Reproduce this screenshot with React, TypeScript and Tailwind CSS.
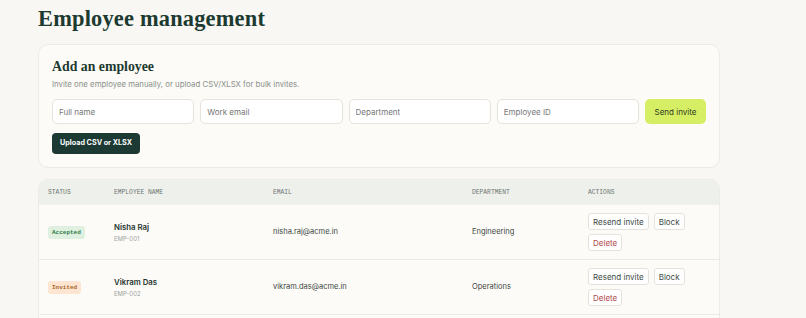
const employees = [
  {
    status: "Accepted",
    name: "Nisha Raj",
    id: "EMP-001",
    email: "nisha.raj@acme.in",
    department: "Engineering",
  },
  {
    status: "Invited",
    name: "Vikram Das",
    id: "EMP-002",
    email: "vikram.das@acme.in",
    department: "Operations",
  },
];

const FIELDS = ["Full name", "Work email", "Department", "Employee ID"];

function StatusBadge({ status }: { status: string }) {
  const accepted = status === "Accepted";
  return (
    <span
      className={
        accepted
          ? "inline-block rounded-[3px] bg-[#dff0e1] px-[4px] py-[3px] font-['Liberation_Mono',monospace] text-[6px] font-bold leading-[7px] text-[#2f7b45]"
          : "inline-block rounded-[3px] bg-[#fde5d2] px-[4px] py-[3px] font-['Liberation_Mono',monospace] text-[6px] font-bold leading-[7px] text-[#a9641f]"
      }
    >
      {status}
    </span>
  );
}

function ActionButton({ label, danger }: { label: string; danger?: boolean }) {
  return (
    <button
      className={
        "h-[17px] rounded-[3px] border border-[#e4e2da] bg-white px-[4px] text-[8px] leading-none " +
        (danger ? "text-[#b24a4a]" : "text-[#3d4a44]")
      }
    >
      {label}
    </button>
  );
}

export default function App() {
  return (
    <div className="min-h-screen bg-[#f8f7f3] px-[38px] pt-[5px] font-['Inter',sans-serif] text-[#1c3a30]">
      <div className="w-[682px]">
        <h1 className="font-['Liberation_Serif',serif] text-[22.4px] font-bold leading-[28px] tracking-[0.2px]">
          Employee management
        </h1>

        <section className="mt-[11px] rounded-[10px] border border-[#ecebe4] bg-[#fcfbf7] px-[13px] pb-[13px] pt-[12px]">
          <h2 className="font-['Liberation_Serif',serif] text-[13.8px] font-bold leading-[20px]">
            Add an employee
          </h2>
          <p className="mt-[1px] text-[7.8px] leading-[12px] text-[#8a8f8a]">
            Invite one employee manually, or upload CSV/XLSX for bulk invites.
          </p>

          <div className="mt-[9px] flex gap-[6px]">
            {FIELDS.map((f) => (
              <input
                key={f}
                placeholder={f}
                className="h-[25px] min-w-0 flex-1 rounded-[5px] border border-[#e5e3dc] bg-white px-[6px] text-[8px] text-[#333] outline-none placeholder:text-[#777]"
              />
            ))}
            <button className="h-[25px] w-[61px] rounded-[5px] bg-[#d6ee64] text-[8px] text-[#2d3b22]">
              Send invite
            </button>
          </div>

          <button className="mt-[9px] h-[21px] rounded-[4px] bg-[#1c3a33] px-[8px] text-[7.2px] font-bold text-white">
            Upload CSV or XLSX
          </button>
        </section>

        <section className="mt-[11px] h-[150px] overflow-hidden rounded-t-[10px] border border-[#ecebe4] bg-[#fcfbf7]">
          <div className="grid h-[25px] grid-cols-[66px_159px_199px_116px_1fr] items-center bg-[#eef0eb] pl-[9px] font-['Liberation_Mono',monospace] text-[6.3px] uppercase text-[#6d7571]">
            <span>Status</span>
            <span>Employee name</span>
            <span>Email</span>
            <span>Department</span>
            <span>Actions</span>
          </div>

          {employees.map((e) => (
            <div
              key={e.id}
              className="grid h-[55px] grid-cols-[66px_159px_199px_116px_1fr] items-center border-b border-[#ecebe4] pl-[9px] text-[7.5px]"
            >
              <div>
                <StatusBadge status={e.status} />
              </div>
              <div>
                <div className="text-[7.8px] font-semibold leading-[11px] text-[#24332d]">{e.name}</div>
                <div className="mt-[1px] text-[6px] text-[#9a9f9b]">{e.id}</div>
              </div>
              <div className="text-[#3b4641]">{e.email}</div>
              <div className="text-[#3b4641]">{e.department}</div>
              <div className="flex flex-col items-start gap-[4px]">
                <div className="flex gap-[5px]">
                  <ActionButton label="Resend invite" />
                  <ActionButton label="Block" />
                </div>
                <ActionButton label="Delete" danger />
              </div>
            </div>
          ))}
        </section>
      </div>
    </div>
  );
}
